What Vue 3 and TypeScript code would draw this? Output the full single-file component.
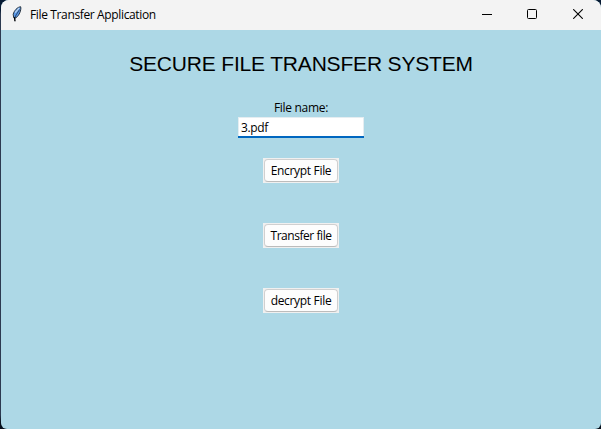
<script setup lang="ts">
import { ref } from 'vue'

interface Action {
  id: string
  label: string
}

const fileName = ref('3.pdf')
const actions: Action[] = [
  { id: 'encrypt', label: 'Encrypt File' },
  { id: 'transfer', label: 'Transfer file' },
  { id: 'decrypt', label: 'decrypt File' },
]
</script>

<template>
  <div class="desktop">
    <main class="window">
      <header class="titlebar">
        <svg class="feather" width="12" height="16" viewBox="0 0 12 16">
          <path d="M9.6 .7C6.5 1 3 4.7 2.2 8.3L2.7 11.8L4 12.2C7.2 11 9.8 6 9.9 2Z" fill="#5b9bea" stroke="#1a222c" stroke-width=".9" />
          <path d="M8.2 1.8L4.2 6.6" stroke="#c3d8ee" stroke-width="1.1" />
          <path d="M8.7 3.4L5.2 8.8L3.6 12L3.9 15.2" fill="none" stroke="#10203a" stroke-width=".7" />
          <path d="M3.5 11.2L4 15.2" stroke="#000" stroke-width="1.2" />
        </svg>
        <span class="caption">File Transfer Application</span>
        <div class="controls">
          <svg width="10" height="10" viewBox="0 0 10 10"><path d="M0 5.5H10" stroke="#000" /></svg>
          <svg width="10" height="10" viewBox="0 0 10 10"><rect x=".5" y=".5" width="9" height="9" rx="1" fill="none" stroke="#000" /></svg>
          <svg class="close" width="10" height="10" viewBox="0 0 10 10"><path d="M.2 .2L9.8 9.8M9.8 .2L.2 9.8" stroke="#000" stroke-width="1.1" /></svg>
        </div>
      </header>
      <section class="content">
        <h1 class="heading">SECURE FILE TRANSFER SYSTEM</h1>
        <label class="label" for="file-name">File name:</label>
        <input id="file-name" v-model="fileName" class="entry" type="text" />
        <div class="actions">
          <div v-for="a in actions" :key="a.id" class="frame">
            <button class="btn" :class="a.id" type="button">{{ a.label }}</button>
          </div>
        </div>
      </section>
    </main>
  </div>
</template>

<style>
body {
  overflow: hidden;
}
</style>

<style scoped>
.desktop {
  box-sizing: border-box;
  width: 601px;
  height: 429px;
  padding-left: 1px;
  background: linear-gradient(#061a33 0, #061a33 10px, #2c3a50 14px, #2c3a50 415px, #06101c 422px);
}
.window {
  display: flex;
  flex-direction: column;
  height: 429px;
  overflow: hidden;
  border-radius: 8px 8px 6px 6px;
  background: #add8e6;
  color: #000;
  font-family: 'Open Sans', 'Noto Sans', sans-serif;
  font-size: 12px;
}
.titlebar {
  display: flex;
  align-items: center;
  box-sizing: border-box;
  height: 30px;
  padding: 0 18px 2px 10px;
  background: #f3f3f3;
}
.caption {
  margin-left: 7px;
  padding-top: 1px;
  line-height: 18px;
  letter-spacing: -0.36px;
  white-space: nowrap;
}
.controls {
  display: flex;
  gap: 35px;
  margin-left: auto;
}
.controls svg,
.feather {
  display: block;
}
.controls .close {
  margin-left: 1px;
}
.content {
  display: flex;
  flex-direction: column;
  align-items: center;
}
.heading {
  margin: 20px 0 0;
  font: 400 21px/28px 'Liberation Sans', Arial, sans-serif;
  letter-spacing: -0.18px;
  white-space: nowrap;
}
.label {
  margin-top: 21px;
  line-height: 18px;
  letter-spacing: -0.3px;
}
.entry {
  box-sizing: border-box;
  width: 126px;
  height: 21px;
  padding: 2px 3px;
  border: 0;
  border-radius: 0;
  outline: none;
  background: #fff;
  box-shadow: inset 0 -2px #0067c0, inset 0 0 0 1px #e5edf1;
  color: #000;
  font: inherit;
  letter-spacing: -0.36px;
}
.actions {
  display: flex;
  flex-direction: column;
  gap: 40px;
  margin-top: 20px;
}
.frame {
  box-sizing: border-box;
  width: 76px;
  height: 25px;
  padding: 1px;
  background: #f0f0f0;
}
.btn {
  display: block;
  box-sizing: border-box;
  width: 74px;
  height: 23px;
  padding: 0;
  border: 1px solid #d0d0d0;
  border-bottom-color: #bcbcbc;
  border-radius: 4px;
  background: #fdfdfd;
  color: #000;
  font: inherit;
  line-height: 21px;
  letter-spacing: -0.32px;
  white-space: nowrap;
}
.btn.transfer {
  letter-spacing: -0.45px;
}
</style>
